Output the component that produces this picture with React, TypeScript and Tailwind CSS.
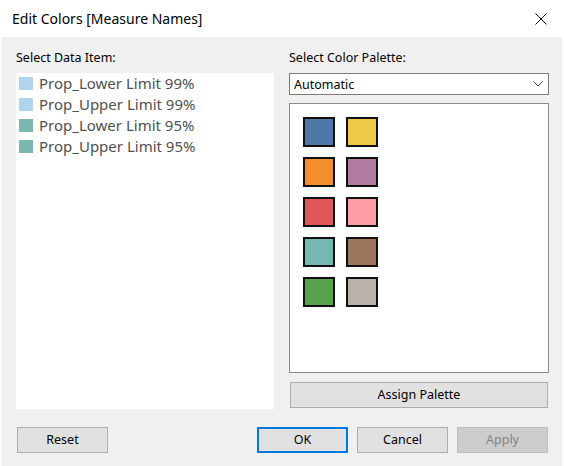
import { useState } from "react";

type DataItem = { label: string; color: string };

const dataItems: DataItem[] = [
  { label: "Prop_Lower Limit 99%", color: "#afd4ec" },
  { label: "Prop_Upper Limit 99%", color: "#afd4ec" },
  { label: "Prop_Lower Limit 95%", color: "#79b7b0" },
  { label: "Prop_Upper Limit 95%", color: "#79b7b0" },
];

// Tableau 10, laid out two per row
const palette = [
  "#4e79a7",
  "#edc948",
  "#f28e2b",
  "#b07aa1",
  "#e15759",
  "#ff9da7",
  "#76b7b2",
  "#9c755f",
  "#59a14f",
  "#bab0ac",
];

const font = "font-['Segoe_UI','Noto_Sans',sans-serif]";

function CloseIcon() {
  return (
    <svg width="12" height="12" viewBox="0 0 12 12" aria-hidden="true">
      <path d="M0.5 0.5 L11.5 11.5 M11.5 0.5 L0.5 11.5" stroke="#111" strokeWidth="1" fill="none" />
    </svg>
  );
}

function Chevron() {
  return (
    <svg width="10" height="6" viewBox="0 0 10 6" aria-hidden="true">
      <path d="M0.5 0.5 L5 5 L9.5 0.5" stroke="#444" strokeWidth="1" fill="none" />
    </svg>
  );
}

export default function App() {
  const [selected] = useState<number | null>(null);

  return (
    <div className={`flex h-[466px] w-[564px] flex-col bg-[#f0f0f0] text-black ${font}`}>
      {/* Title bar */}
      <div className="flex h-[37px] shrink-0 items-center justify-between bg-white pl-[12px] pr-[17px]">
        <span className="text-[14px] leading-none">Edit Colors [Measure Names]</span>
        <CloseIcon />
      </div>

      {/* Body */}
      <div className="flex flex-1 flex-col border-x-2 border-[#fafafa] pl-[14px] pr-[13px] pt-[13px]">
        <div className="flex gap-[15px]">
          {/* Left: data items */}
          <div className="flex w-[258px] flex-col">
            <div className="mb-[7px] h-[16px] text-[12.5px] leading-[16px]">Select Data Item:</div>
            <div className="flex h-[336px] flex-col bg-white pl-[3px]">
              {dataItems.map((item, i) => (
                <div
                  key={item.label}
                  className={`flex h-[21px] items-center gap-[6px] ${selected === i ? "bg-[#cce8ff]" : ""}`}
                >
                  <span className="h-[13px] w-[14px] shrink-0" style={{ backgroundColor: item.color }} />
                  <span className="text-[15px] leading-none text-[#505050]">{item.label}</span>
                </div>
              ))}
            </div>
          </div>

          {/* Right: palette */}
          <div className="flex w-[260px] flex-col">
            <div className="mb-[7px] h-[16px] text-[12.5px] leading-[16px]">Select Color Palette:</div>
            <div className="flex h-[22px] items-center justify-between border border-[#7a7a7a] bg-white pl-[4px] pr-[5px]">
              <span className="pt-[2px] text-[12.5px] leading-none">Automatic</span>
              <Chevron />
            </div>
            <div className="mt-[8px] h-[270px] border border-[#8a8a8a] bg-white pl-[13px] pt-[13px]">
              <div className="grid w-max grid-cols-2 gap-x-[11px] gap-y-[10px]">
                {palette.map((c) => (
                  <span
                    key={c}
                    className="block h-[30px] w-[32px] border-2 border-[#111]"
                    style={{ backgroundColor: c }}
                  />
                ))}
              </div>
            </div>
            <button
              type="button"
              className="mx-[1px] mt-[9px] h-[26px] border border-[#adadad] bg-[#e1e1e1] text-[12.5px]"
            >
              Assign Palette
            </button>
          </div>
        </div>

        {/* Footer buttons */}
        <div className="mt-[18px] flex items-center">
          <button
            type="button"
            className="ml-[1px] h-[26px] w-[91px] border border-[#adadad] bg-[#e1e1e1] text-[12.5px]"
          >
            Reset
          </button>
          <div className="ml-auto mr-[1px] flex gap-[9px]">
            <button
              type="button"
              className="h-[26px] w-[91px] border-2 border-[#0078d7] bg-[#e1e1e1] text-[12.5px]"
            >
              OK
            </button>
            <button
              type="button"
              className="h-[26px] w-[91px] border border-[#adadad] bg-[#e1e1e1] text-[12.5px]"
            >
              Cancel
            </button>
            <button
              type="button"
              disabled
              className="h-[26px] w-[91px] border border-[#bfbfbf] bg-[#cccccc] text-[12.5px] text-[#838383]"
            >
              Apply
            </button>
          </div>
        </div>
      </div>
    </div>
  );
}
